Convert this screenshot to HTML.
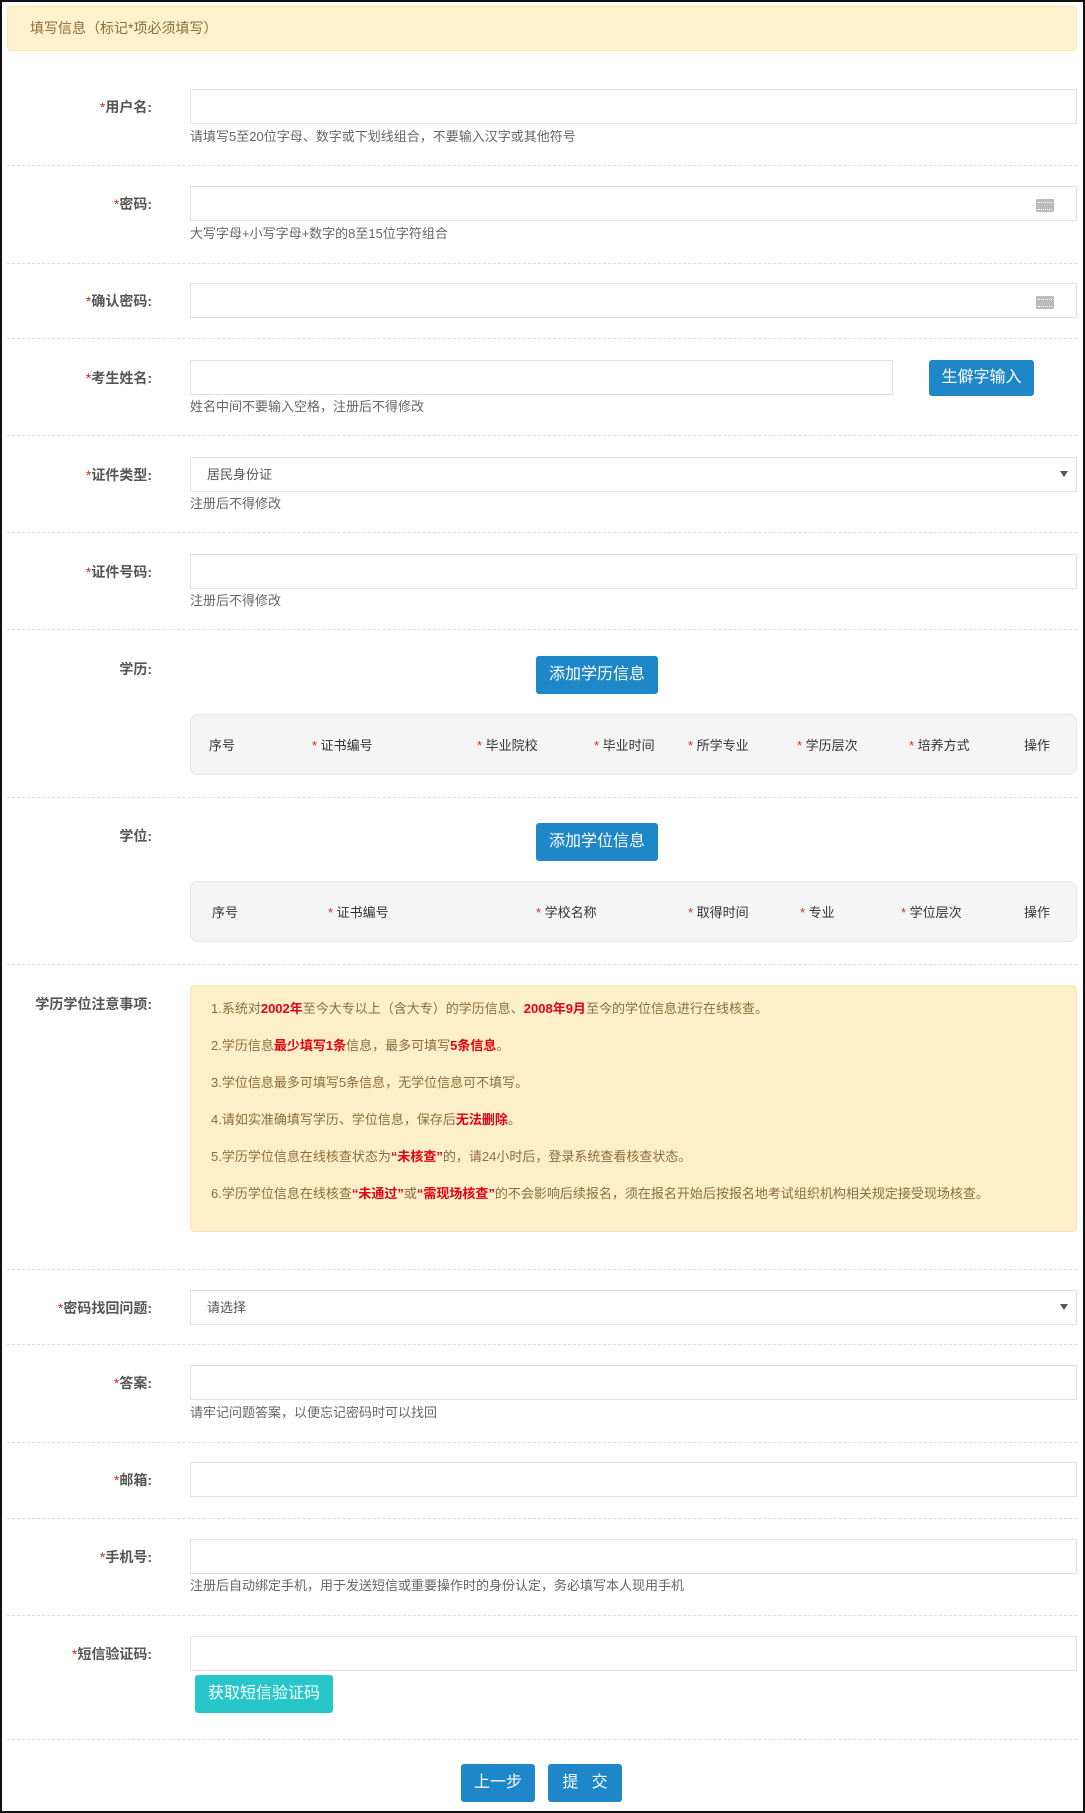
<!DOCTYPE html>
<html><head><meta charset="utf-8"><style>
*{margin:0;padding:0;box-sizing:border-box}
body{width:1085px;height:1813px;background:#fff;font-family:"Liberation Sans","Noto Sans CJK SC",sans-serif;font-size:14px;color:#555;position:relative;overflow:hidden}
.frame{position:absolute;left:0;top:0;width:1085px;height:1813px;border:2px solid #111}
.abs{position:absolute}
.hdr{left:7px;top:6px;width:1070px;height:45px;background:#fdf2cc;border:1px solid #f7e8b4;border-radius:4px;color:#8a6d3b;font-size:14px;line-height:43px;padding-left:22px}
.lbl{right:933px;text-align:right;font-weight:bold;color:#555;font-size:14px;white-space:nowrap}
.lbl b{color:#d9291c;font-weight:normal}
.inp{left:190px;width:887px;height:35px;border:1px solid #e2e2e2;background:#fff}
.help{left:190px;color:#666;font-size:13px;white-space:nowrap}
.line{left:7px;width:1070px;border-top:1px dashed #ddd;height:0}
.btn{background:#1e87c8;color:#fff;border-radius:3px;text-align:center;font-size:16px}
.tbl{left:190px;width:887px;height:61px;background:#f5f5f5;border:1px solid #e6e6e6;border-radius:8px}
.th{top:20px;font-size:13px;color:#333;white-space:nowrap}
.th b{color:#d9291c;font-weight:normal}
.kb{right:22px;top:12px;width:18px;height:13px;background:#bbb;border-radius:1px}
.kb:after{content:"";position:absolute;left:2px;top:3px;width:14px;height:6px;border-top:1px dotted #fff;border-bottom:1px dotted #fff}
.arr{position:absolute;right:8px;top:13px;border-left:4px solid transparent;border-right:4px solid transparent;border-top:6px solid #555}
.note{left:190px;top:985px;width:887px;height:247px;background:#fdf0c9;border:1px solid #f8e6b5;border-radius:4px;color:#8a6d3b;font-size:13px}
.note p{position:absolute;left:20px;white-space:nowrap}
.note b{color:#e60012}
</style></head><body>
<div class="frame"></div>
<div class="abs hdr">填写信息（标记*项必须填写）</div>

<div class="abs lbl" style="top:97px"><b>*</b>用户名:</div>
<div class="abs inp" style="top:89px"></div>
<div class="abs help" style="top:126px">请填写5至20位字母、数字或下划线组合，不要输入汉字或其他符号</div>
<div class="abs line" style="top:165px"></div>

<div class="abs lbl" style="top:194px"><b>*</b>密码:</div>
<div class="abs inp" style="top:186px"><div class="abs kb"></div></div>
<div class="abs help" style="top:223px">大写字母+小写字母+数字的8至15位字符组合</div>
<div class="abs line" style="top:263px"></div>

<div class="abs lbl" style="top:291px"><b>*</b>确认密码:</div>
<div class="abs inp" style="top:283px"><div class="abs kb"></div></div>
<div class="abs line" style="top:338px"></div>

<div class="abs lbl" style="top:368px"><b>*</b>考生姓名:</div>
<div class="abs inp" style="top:360px;width:703px"></div>
<div class="abs btn" style="left:929px;top:360px;width:105px;height:36px;line-height:36px">生僻字输入</div>
<div class="abs help" style="top:396px">姓名中间不要输入空格，注册后不得修改</div>
<div class="abs line" style="top:435px"></div>

<div class="abs lbl" style="top:465px"><b>*</b>证件类型:</div>
<div class="abs inp" style="top:457px;padding-left:16px;line-height:33px;font-size:13px;color:#555">居民身份证<span class="arr"></span></div>
<div class="abs help" style="top:493px">注册后不得修改</div>
<div class="abs line" style="top:532px"></div>

<div class="abs lbl" style="top:562px"><b>*</b>证件号码:</div>
<div class="abs inp" style="top:554px"></div>
<div class="abs help" style="top:590px">注册后不得修改</div>
<div class="abs line" style="top:629px"></div>

<div class="abs lbl" style="top:659px">学历:</div>
<div class="abs btn" style="left:536px;top:656px;width:122px;height:38px;line-height:38px">添加学历信息</div>
<div class="abs tbl" style="top:714px">
<span class="abs th" style="left:18px">序号</span>
<span class="abs th" style="left:121px"><b>*</b> 证书编号</span>
<span class="abs th" style="left:286px"><b>*</b> 毕业院校</span>
<span class="abs th" style="left:403px"><b>*</b> 毕业时间</span>
<span class="abs th" style="left:497px"><b>*</b> 所学专业</span>
<span class="abs th" style="left:606px"><b>*</b> 学历层次</span>
<span class="abs th" style="left:718px"><b>*</b> 培养方式</span>
<span class="abs th" style="left:833px">操作</span>
</div>
<div class="abs line" style="top:797px"></div>

<div class="abs lbl" style="top:826px">学位:</div>
<div class="abs btn" style="left:536px;top:823px;width:122px;height:38px;line-height:38px">添加学位信息</div>
<div class="abs tbl" style="top:881px">
<span class="abs th" style="left:21px">序号</span>
<span class="abs th" style="left:137px"><b>*</b> 证书编号</span>
<span class="abs th" style="left:345px"><b>*</b> 学校名称</span>
<span class="abs th" style="left:497px"><b>*</b> 取得时间</span>
<span class="abs th" style="left:609px"><b>*</b> 专业</span>
<span class="abs th" style="left:710px"><b>*</b> 学位层次</span>
<span class="abs th" style="left:833px">操作</span>
</div>
<div class="abs line" style="top:964px"></div>

<div class="abs lbl" style="top:994px">学历学位注意事项:</div>
<div class="abs note">
<p style="top:12px">1.系统对<b>2002年</b>至今大专以上（含大专）的学历信息、<b>2008年9月</b>至今的学位信息进行在线核查。</p>
<p style="top:49px">2.学历信息<b>最少填写1条</b>信息，最多可填写<b>5条信息</b>。</p>
<p style="top:86px">3.学位信息最多可填写5条信息，无学位信息可不填写。</p>
<p style="top:123px">4.请如实准确填写学历、学位信息，保存后<b>无法删除</b>。</p>
<p style="top:160px">5.学历学位信息在线核查状态为<b>“未核查”</b>的，请24小时后，登录系统查看核查状态。</p>
<p style="top:197px">6.学历学位信息在线核查<b>“未通过”</b>或<b>“需现场核查”</b>的不会影响后续报名，须在报名开始后按报名地考试组织机构相关规定接受现场核查。</p>
</div>
<div class="abs line" style="top:1269px"></div>

<div class="abs lbl" style="top:1298px"><b>*</b>密码找回问题:</div>
<div class="abs inp" style="top:1290px;padding-left:16px;line-height:33px;font-size:13px;color:#555">请选择<span class="arr"></span></div>
<div class="abs line" style="top:1344px"></div>

<div class="abs lbl" style="top:1373px"><b>*</b>答案:</div>
<div class="abs inp" style="top:1365px"></div>
<div class="abs help" style="top:1402px">请牢记问题答案，以便忘记密码时可以找回</div>
<div class="abs line" style="top:1442px"></div>

<div class="abs lbl" style="top:1470px"><b>*</b>邮箱:</div>
<div class="abs inp" style="top:1462px"></div>
<div class="abs line" style="top:1518px"></div>

<div class="abs lbl" style="top:1547px"><b>*</b>手机号:</div>
<div class="abs inp" style="top:1539px"></div>
<div class="abs help" style="top:1575px">注册后自动绑定手机，用于发送短信或重要操作时的身份认定，务必填写本人现用手机</div>
<div class="abs line" style="top:1615px"></div>

<div class="abs lbl" style="top:1644px"><b>*</b>短信验证码:</div>
<div class="abs inp" style="top:1636px"></div>
<div class="abs btn" style="left:195px;top:1675px;width:138px;height:38px;line-height:38px;background:#27c7c9">获取短信验证码</div>
<div class="abs line" style="top:1739px"></div>

<div class="abs btn" style="left:461px;top:1764px;width:74px;height:38px;line-height:38px">上一步</div>
<div class="abs btn" style="left:548px;top:1764px;width:74px;height:38px;line-height:38px">提&nbsp;&nbsp;&nbsp;交</div>
</body></html>
